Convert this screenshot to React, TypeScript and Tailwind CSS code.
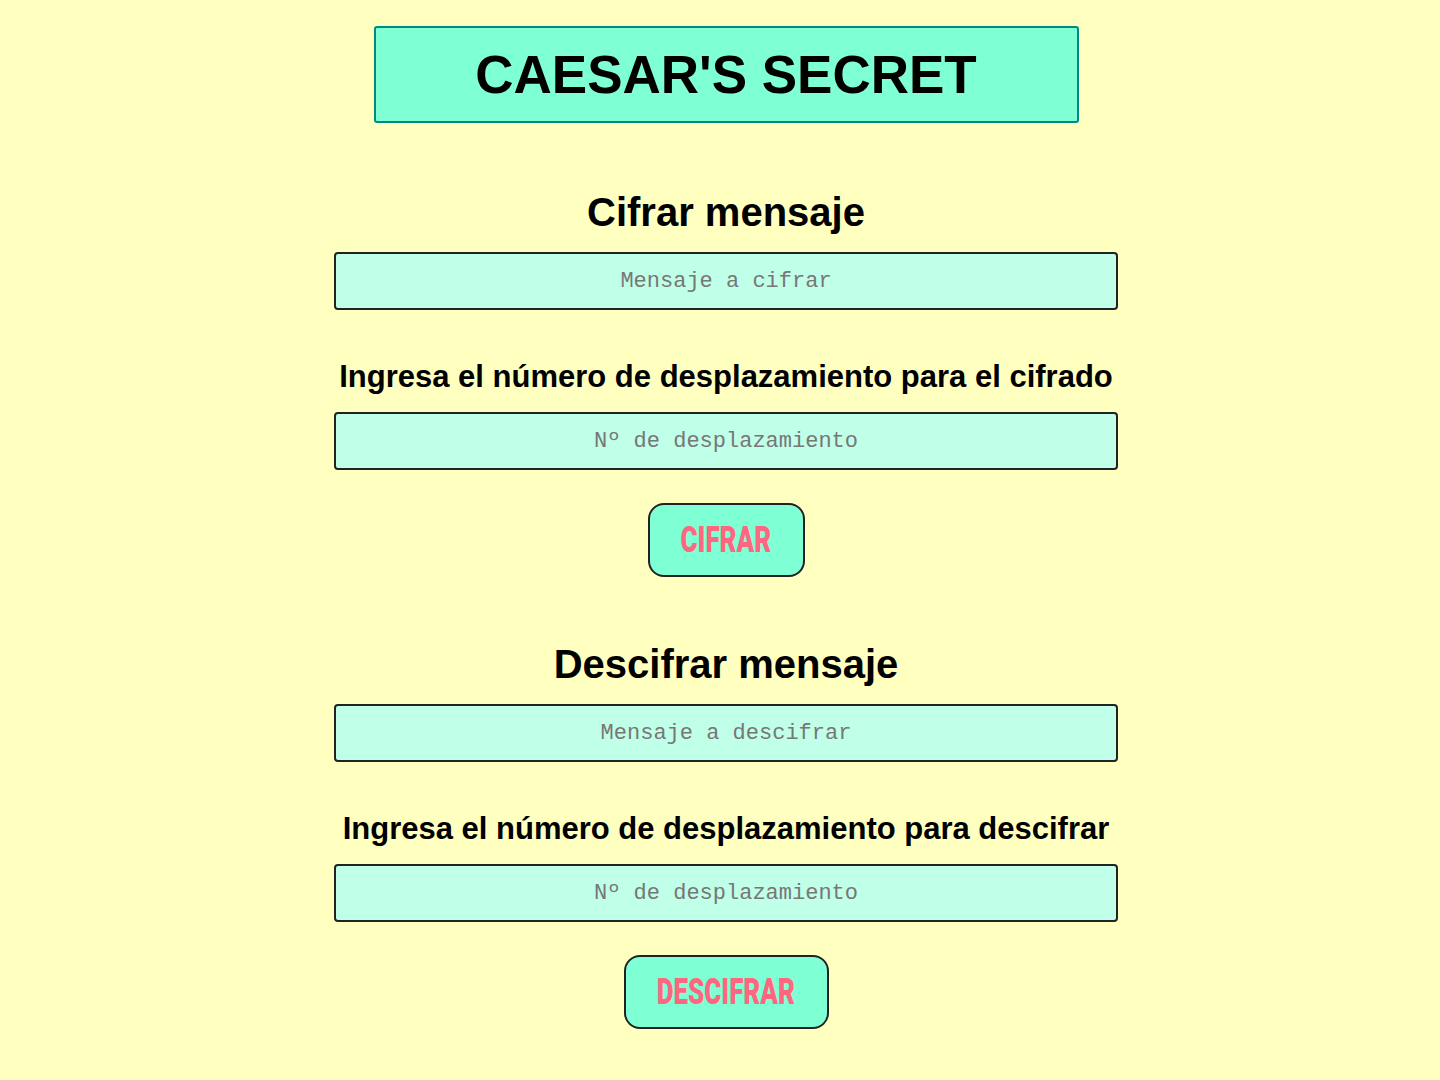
import { useState } from "react";

type SectionProps = {
  title: string;
  placeholder: string;
  shiftLabel: string;
  buttonLabel: string;
  buttonWidth: string;
};

function CipherSection({ title, placeholder, shiftLabel, buttonLabel, buttonWidth }: SectionProps) {
  const [text, setText] = useState("");
  const [shift, setShift] = useState("");

  return (
    <section className="flex w-[784px] flex-col items-center">
      <h2 className="text-[40px] font-bold leading-[46px] text-black">{title}</h2>
      <input
        value={text}
        onChange={(e) => setText(e.target.value)}
        placeholder={placeholder}
        className="mt-[17px] h-[58px] w-full rounded-[4px] border-2 border-[#222] bg-[#c0ffe8] text-center font-['Liberation_Mono',monospace] text-[22px] text-[#333] outline-none placeholder:text-[#777]"
      />
      <h3 className="mt-[49px] whitespace-nowrap text-[31px] font-bold leading-[36px] text-black">{shiftLabel}</h3>
      <input
        value={shift}
        onChange={(e) => setShift(e.target.value)}
        placeholder="Nº de desplazamiento"
        className="mt-[17px] h-[58px] w-full rounded-[4px] border-2 border-[#222] bg-[#c0ffe8] text-center font-['Liberation_Mono',monospace] text-[22px] text-[#333] outline-none placeholder:text-[#777]"
      />
      <button
        type="button"
        className={`mt-[33px] flex h-[74px] ${buttonWidth} items-center justify-center rounded-[16px] border-2 border-[#222] bg-[#7fffd4] font-['Roboto',sans-serif] text-[36px] font-black text-[#ff6680]`}
      >
        <span className="inline-block scale-x-[0.72] leading-none">{buttonLabel}</span>
      </button>
    </section>
  );
}

export default function App() {
  return (
    <div className="flex min-h-[1080px] flex-col items-center bg-[#ffffc0] pl-[12px] pt-[26px] font-['Liberation_Sans',Arial,sans-serif]">
      <header className="flex h-[97px] w-[705px] items-center justify-center rounded-[3px] border-2 border-[#008b80] bg-[#7fffd4]">
        <h1 className="text-[53px] font-bold leading-none text-black">CAESAR'S SECRET</h1>
      </header>

      <div className="mt-[66px]">
        <CipherSection
          title="Cifrar mensaje"
          placeholder="Mensaje a cifrar"
          shiftLabel="Ingresa el número de desplazamiento para el cifrado"
          buttonLabel="CIFRAR"
          buttonWidth="w-[157px]"
        />
      </div>

      <div className="mt-[64px]">
        <CipherSection
          title="Descifrar mensaje"
          placeholder="Mensaje a descifrar"
          shiftLabel="Ingresa el número de desplazamiento para descifrar"
          buttonLabel="DESCIFRAR"
          buttonWidth="w-[205px]"
        />
      </div>
    </div>
  );
}
